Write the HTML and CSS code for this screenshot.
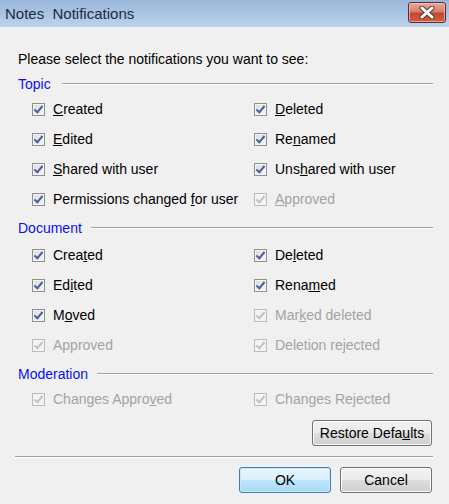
FILE: index.html
```html
<!DOCTYPE html>
<html>
<head>
<meta charset="utf-8">
<link rel="stylesheet" href="styles.css">
</head>
<body>
<div class="window">
  <div class="titlebar">
    <span class="title">Notes&nbsp; Notifications</span>
    <button class="close" aria-label="Close">
      <svg width="18" height="13" viewBox="0 0 18 13">
        <path d="M4 2 L14 11 M14 2 L4 11" stroke="#5a3a3a" stroke-width="5" stroke-linecap="round"/>
        <path d="M4 2 L14 11 M14 2 L4 11" stroke="#ffffff" stroke-width="3" stroke-linecap="round"/>
      </svg>
    </button>
  </div>
  <div class="content">
    <div class="intro">Please select the notifications you want to see:</div>

    <div class="group topic">
      <div class="group-head"><span class="group-title">Topic</span><span class="rule"></span></div>
      <div class="grid">
        <label class="cb"><span class="box"></span><span><u>C</u>reated</span></label>
        <label class="cb"><span class="box"></span><span><u>D</u>eleted</span></label>
        <label class="cb"><span class="box"></span><span><u>E</u>dited</span></label>
        <label class="cb"><span class="box"></span><span>Re<u>n</u>amed</span></label>
        <label class="cb"><span class="box"></span><span><u>S</u>hared with user</span></label>
        <label class="cb"><span class="box"></span><span>Uns<u>h</u>ared with user</span></label>
        <label class="cb"><span class="box"></span><span>Permissions changed <u>f</u>or user</span></label>
        <label class="cb disabled"><span class="box"></span><span><u>A</u>pproved</span></label>
      </div>
    </div>

    <div class="group document">
      <div class="group-head"><span class="group-title">Document</span><span class="rule"></span></div>
      <div class="grid">
        <label class="cb"><span class="box"></span><span>Crea<u>t</u>ed</span></label>
        <label class="cb"><span class="box"></span><span>De<u>l</u>eted</span></label>
        <label class="cb"><span class="box"></span><span>Ed<u>i</u>ted</span></label>
        <label class="cb"><span class="box"></span><span>Rena<u>m</u>ed</span></label>
        <label class="cb"><span class="box"></span><span>M<u>o</u>ved</span></label>
        <label class="cb disabled"><span class="box"></span><span>Mar<u>k</u>ed deleted</span></label>
        <label class="cb disabled"><span class="box"></span><span>Approved</span></label>
        <label class="cb disabled"><span class="box"></span><span>Deletion rejected</span></label>
      </div>
    </div>

    <div class="group moderation">
      <div class="group-head"><span class="group-title">Moderation</span><span class="rule"></span></div>
      <div class="grid">
        <label class="cb disabled"><span class="box"></span><span>Changes Appro<u>v</u>ed</span></label>
        <label class="cb disabled"><span class="box"></span><span>Changes Rejected</span></label>
      </div>
    </div>

    <div class="restore-row">
      <button class="btn restore">Restore Defa<u>u</u>lts</button>
    </div>
    <div class="separator"></div>
    <div class="actions">
      <button class="btn default">OK</button>
      <button class="btn">Cancel</button>
    </div>
  </div>
</div>
</body>
</html>
```

FILE: styles.css
```css
html, body {
  margin: 0;
  padding: 0;
  background: #f0f0f0;
}

.window {
  width: 449px;
  height: 504px;
  background: #f0f0f0;
  font-family: "Liberation Sans", Arial, sans-serif;
  font-size: 14px;
  color: #000;
  overflow: hidden;
}

.titlebar {
  height: 27px;
  background: linear-gradient(to bottom, #9ab6d8 0%, #a9c3e2 50%, #bcd3ec 100%);
  display: flex;
  align-items: center;
  justify-content: space-between;
  padding: 0 3px 0 5px;
  box-sizing: border-box;
}

.title {
  font-size: 15px;
  color: #1b2b3f;
  padding-bottom: 1px;
}

.close {
  width: 38px;
  height: 21px;
  margin-top: -3px;
  padding: 0;
  border: 1px solid #5d2a34;
  border-radius: 3px;
  background: linear-gradient(to bottom, #e9a99c 0%, #d97d69 45%, #c4482f 55%, #cf5f3f 100%);
  box-shadow: inset 0 0 0 1px rgba(255, 210, 200, 0.6);
  display: flex;
  align-items: center;
  justify-content: center;
}

.content {
  padding: 24px 16px 0 18px;
}

.intro {
  line-height: 16px;
}

.group.topic {
  margin-top: 9px;
}

.group.document,
.group.moderation {
  margin-top: 6px;
}

.group-head {
  display: flex;
  align-items: center;
  line-height: 16px;
  margin-bottom: 2px;
}

.document .group-head {
  margin-bottom: 4px;
}

.group-title {
  color: #0a10ee;
  margin-right: 9px;
}

.topic .group-title {
  margin-right: 11px;
}

.rule {
  flex: 1;
  height: 1px;
  background: #a0a0a0;
  border-bottom: 1px solid #ffffff;
}

.grid {
  display: grid;
  grid-template-columns: 222px 1fr;
  padding-left: 14px;
}

.cb {
  height: 30px;
  display: flex;
  align-items: center;
  gap: 8px;
  white-space: nowrap;
}

.box {
  width: 11px;
  height: 11px;
  border: 1px solid #8e8f8f;
  background: linear-gradient(135deg, #dcdcdc 0%, #f6f6f6 100%);
  box-shadow: inset 0 0 0 1px #f4f4f4;
  position: relative;
  flex: none;
}

.box::after {
  content: "";
  position: absolute;
  left: 3px;
  top: 0px;
  width: 3px;
  height: 7px;
  border-right: 2px solid #4a5f9c;
  border-bottom: 2px solid #4a5f9c;
  transform: rotate(40deg);
}

.cb.disabled {
  color: #a3a3a3;
}

.cb.disabled .box {
  border-color: #bcbcbc;
  background: #f4f4f4;
  box-shadow: none;
}

.cb.disabled .box::after {
  border-color: #c2c2c2;
}

.restore-row {
  display: flex;
  justify-content: flex-end;
  margin-top: 6px;
  padding-right: 1px;
}

.btn {
  font-family: "Liberation Sans", Arial, sans-serif;
  font-size: 14px;
  color: #000;
  height: 26px;
  width: 92px;
  padding: 0;
  border: 1px solid #707070;
  border-radius: 3px;
  background: linear-gradient(to bottom, #f2f2f2 0%, #ebebeb 48%, #dddddd 52%, #cfcfcf 100%);
  box-shadow: inset 0 0 0 1px #fcfcfc;
}

.btn.restore {
  width: 120px;
}

.btn.default {
  border-color: #3c7fb1;
  background: linear-gradient(to bottom, #eaf6fd 0%, #d9f0fc 48%, #bee6fd 52%, #a7d9f5 100%);
  box-shadow: inset 0 0 0 1px #c6e9fc;
}

.separator {
  margin: 10px 0 0 -3px;
  height: 1px;
  background: #a0a0a0;
  border-bottom: 1px solid #ffffff;
}

.actions {
  display: flex;
  justify-content: flex-end;
  gap: 9px;
  margin-top: 9px;
  padding-right: 1px;
}
```
